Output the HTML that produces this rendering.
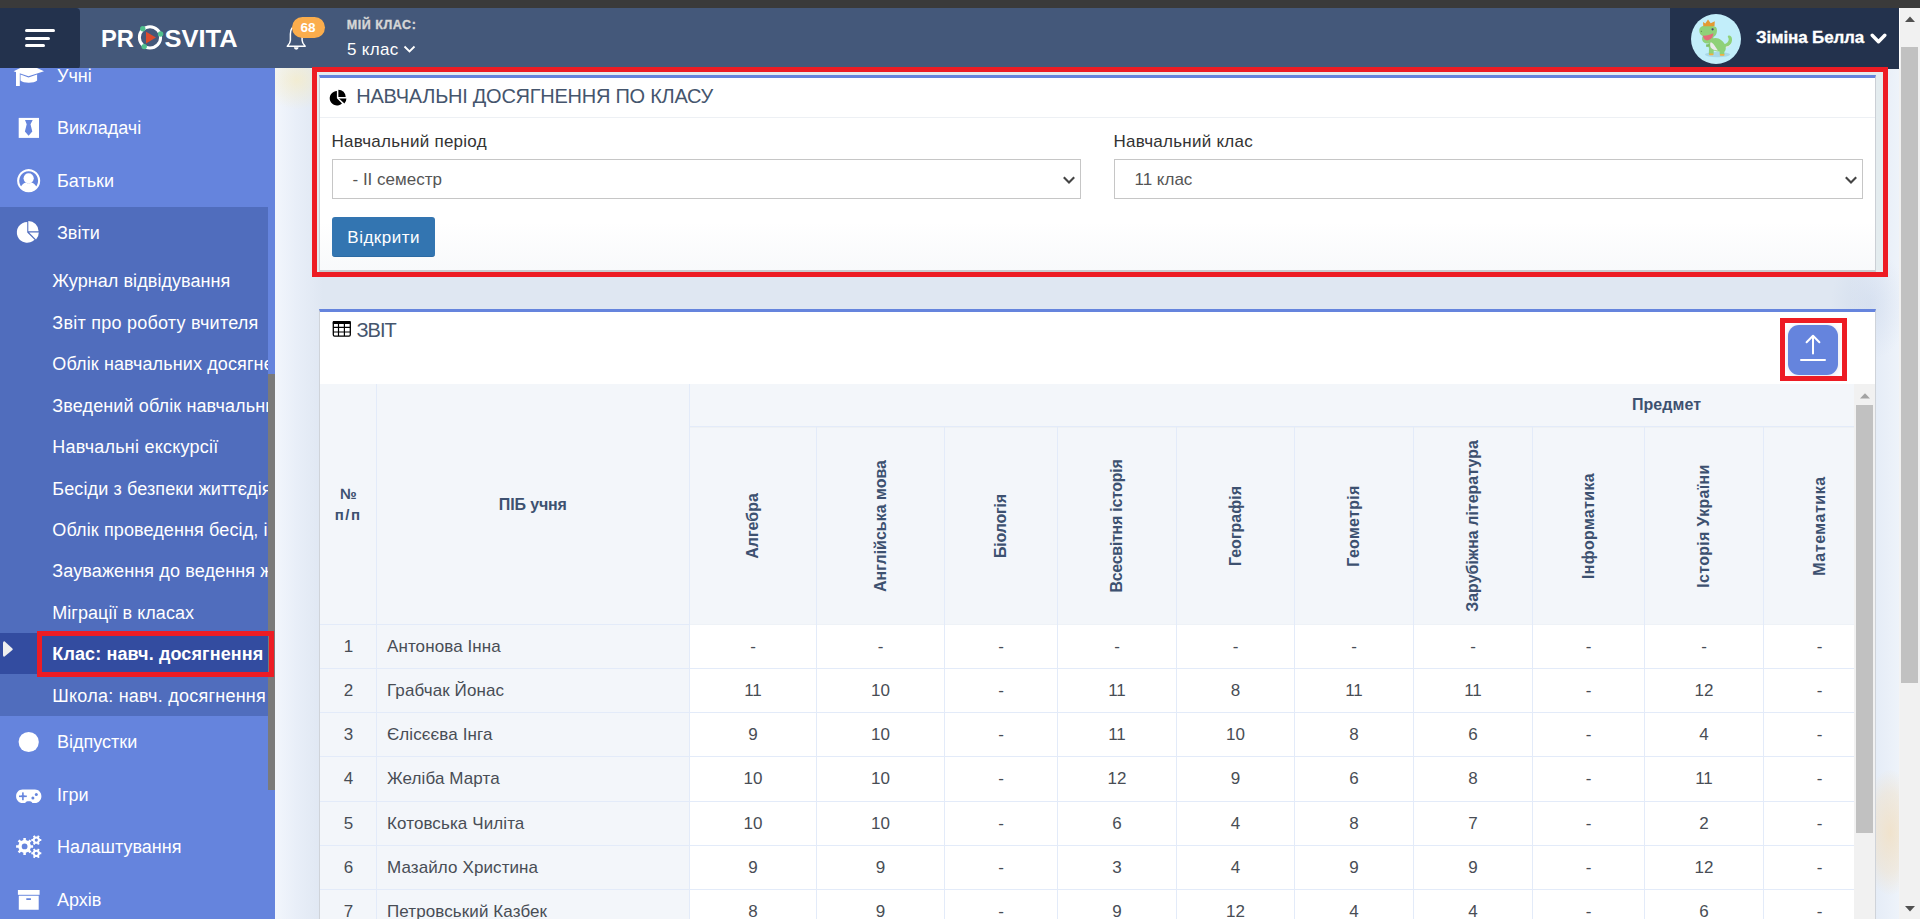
<!DOCTYPE html>
<html><head><meta charset="utf-8">
<style>
*{box-sizing:border-box;margin:0;padding:0}
html,body{width:1920px;height:919px;overflow:hidden;background:#eef3fa;font-family:"Liberation Sans",sans-serif}
.a{position:absolute}
.t{position:absolute;white-space:nowrap;line-height:1}
#topbar{left:0;top:0;width:1920px;height:8px;background:#3a3a3a}
#content{left:275px;top:68px;width:1625px;height:851px;background:linear-gradient(90deg,#f2f6fc 0px,#e8eef8 22px,#dfe7f2 48px,#dfe7f2 1575px,#e6edf7 1603px,#eef3fa 1625px)}
#header{left:0;top:8px;width:1899px;height:60px;background:#44587a}
#burger{left:0;top:8px;width:80px;height:60.5px;background:#23324d;border-radius:0 4px 4px 0}
#burger i{position:absolute;left:25px;height:3px;background:#fff;border-radius:2px}
#userbox{left:1670px;top:8px;width:229px;height:60.7px;background:#23324d}
#sidebar{left:0;top:68px;width:275px;height:851px;background:#6584dd;overflow:hidden}
.side{color:#fff;font-size:18px}
#vscroll{left:1899px;top:8px;width:21px;height:911px;background:#f1f1f1;border-left:1px solid #f3f3f3}
</style></head><body>
<div id="content" class="a"></div>
<div class="a" style="left:262px;top:50px;width:70px;height:60px;border-radius:50%;background:radial-gradient(ellipse at center,rgba(250,235,180,0.55) 0%,rgba(250,235,180,0) 70%)"></div>
<div class="a" style="left:1862px;top:770px;width:56px;height:125px;border-radius:50%;background:radial-gradient(ellipse at center,rgba(242,222,190,0.75) 0%,rgba(242,222,190,0.4) 45%,rgba(242,222,190,0) 72%)"></div>
<div class="a" style="left:1830px;top:250px;width:80px;height:110px;border-radius:50%;background:radial-gradient(ellipse at center,rgba(190,205,230,0.35) 0%,rgba(190,205,230,0) 70%)"></div>
<div id="topbar" class="a"></div>
<div id="header" class="a"></div>
<div id="burger" class="a"><i style="top:21px;width:30px"></i><i style="top:29px;width:25px"></i><i style="top:36px;width:20px"></i></div>
<svg class="a" style="left:95px;top:15px" width="150" height="45" viewBox="0 0 150 45">
  <text x="6" y="31.6" font-family="Liberation Sans" font-weight="bold" font-size="24" fill="#fff" textLength="33" lengthAdjust="spacingAndGlyphs">PR</text>
  <circle cx="55" cy="22.4" r="10.6" fill="none" stroke="#fff" stroke-width="3"/>
  <path d="M51 16.8 L61 22.4 L51 28.5 Z" fill="#dd4b2b"/>
  <circle cx="47.8" cy="13.7" r="2.7" fill="#4fc08d"/>
  <circle cx="65.6" cy="19" r="2.7" fill="#4fc08d"/>
  <circle cx="49.2" cy="31.6" r="2.7" fill="#4fc08d"/>
  <text x="69.5" y="31.6" font-family="Liberation Sans" font-weight="bold" font-size="24" fill="#fff" textLength="73" lengthAdjust="spacingAndGlyphs">SVITA</text>
</svg>
<svg class="a" style="left:284px;top:22px" width="26" height="30" viewBox="0 0 26 30">
  <path d="M12.2 4.5 C8 4.5 6.4 8 6.4 12 L6.4 18.3 C6.4 20.8 4.8 22.8 3.3 24.3 L21.2 24.3 C19.7 22.8 18.1 20.8 18.1 18.3 L18.1 12 C18.1 8 16.5 4.5 12.2 4.5 Z" fill="none" stroke="#fff" stroke-width="1.5" stroke-linejoin="round"/>
  <path d="M9.9 25.3 A2.35 2.35 0 0 0 14.6 25.3 Z" fill="#fff"/>
</svg>
<div class="a" style="left:292px;top:17px;width:33px;height:21px;border-radius:11px;background:#fbad4c"></div>
<div class="t" style="left:300.5px;top:20.8px;font-size:13.5px;font-weight:bold;color:#fff">68</div>
<div class="t" style="left:346.8px;top:18.5px;font-size:12.5px;font-weight:bold;color:#d6d6d6;letter-spacing:0.55px;-webkit-text-stroke:0.35px #d6d6d6">МІЙ КЛАС:</div>
<div class="t" style="left:347px;top:40.5px;font-size:17px;color:#fff;letter-spacing:0.3px">5 клас</div>
<svg class="a" style="left:403px;top:45px" width="13" height="9" viewBox="0 0 13 9"><path d="M1.5 1.5 L6.5 6.5 L11.5 1.5" fill="none" stroke="#fff" stroke-width="1.8"/></svg>
<div id="userbox" class="a"></div>
<svg class="a" style="left:1691px;top:14px" width="50" height="50" viewBox="0 0 50 50">
  <circle cx="25" cy="25" r="25" fill="#c2eefa"/>
  <ellipse cx="26.5" cy="40.6" rx="12.5" ry="2.6" fill="#a8d8e8"/>
  <path d="M32 33.5 C37 33.5 41.5 30 41 25 C40.8 22.5 39 21 37.2 21.8 C36.5 22.3 36.8 23 37.3 23.8 C38.3 26 37.5 29 33 30.5 Z" fill="#8fd178"/>
  <path d="M35 32.6 C37.5 32.2 39.5 31 40.5 29.5 C39.5 32.5 37 33.8 33.5 34 Z" fill="#e6e6e6"/>
  <path d="M18.5 27 C20 24 24.5 23.2 27.5 24.5 C31.5 26.5 34.8 30 34.8 34 C34.8 36.5 33.8 37.5 33.2 38 L33.5 40.5 L28.8 40.5 L28.5 37.5 C26.5 37.5 24 37 22.8 36.5 L22.5 40.2 L17.8 40.2 L18 34.5 C17 32 17.2 29 18.5 27 Z" fill="#8fd178"/>
  <path d="M19.5 28 C21.5 28.5 23 30.5 24.5 33 C25.8 35 26.5 36 27 36.5 C24 36.5 21 35.5 19.8 33.5 C19 32 19 30 19.5 28 Z" fill="#ebebeb"/>
  <path d="M15 30.5 L18.5 30 L18.8 32.5 L15.3 33 Z" fill="#7fbf68"/>
  <path d="M8.3 16.5 C8.3 13 11 11.4 15.5 11.4 C19.5 11.4 22.5 11.6 24.8 13 C26.3 14.5 26.2 17 25.5 19.5 C25 21 24 22 22.5 23 C22.5 25.5 21 28 18 29.2 C15 30 12 29 11.2 26 C11 24.5 11.2 23 11.8 22 C9.8 21.5 8.3 19.5 8.3 16.5 Z" fill="#8fd178"/>
  <path d="M11.8 21.6 C15 21.8 19 21 22.3 19.3 C22.3 22.5 20.5 25.5 17 26.3 C14.5 26.8 12.3 25 11.8 21.6 Z" fill="#e46a78"/>
  <circle cx="21.6" cy="15.3" r="1.1" fill="#40406a"/>
  <circle cx="10.3" cy="17.3" r="0.5" fill="#4a6a40"/>
  <path d="M12.3 12.2 L12 8 L14.3 9.5 L17 5.4 L19.7 9.3 L23.8 7.2 L23.5 12.2 Z" fill="#e39a32"/>
  <rect x="18" y="39.6" width="4.5" height="1.7" rx="0.8" fill="#f0b040"/>
  <rect x="28.8" y="40" width="4.7" height="1.7" rx="0.8" fill="#f0b040"/>
</svg>
<div class="t" style="left:1756px;top:28.6px;font-size:17px;font-weight:bold;color:#fff;letter-spacing:-0.15px;-webkit-text-stroke:0.3px #fff">Зіміна Белла</div>
<svg class="a" style="left:1870px;top:33px" width="17" height="12" viewBox="0 0 17 12"><path d="M2.2 2.2 L8.5 8.7 L14.8 2.2" fill="none" stroke="#fff" stroke-width="3.4" stroke-linecap="round" stroke-linejoin="round"/></svg>
<div id="vscroll" class="a"></div>
<div class="a" style="left:1899px;top:8px;width:1px;height:60px;background:#fff"></div>
<div class="a" style="left:1901px;top:47px;width:17px;height:636px;background:#c1c1c1"></div>
<svg class="a" style="left:1904px;top:15px" width="12" height="8"><path d="M1 7 L6 1.5 L11 7 Z" fill="#505050"/></svg>
<svg class="a" style="left:1904px;top:905px" width="12" height="8"><path d="M1 1 L6 6.5 L11 1 Z" fill="#505050"/></svg>
<div id="sidebar" class="a">
  <div class="a" style="left:0;top:139px;width:268px;height:509px;background:#506dbd"></div>
  <div class="a" style="left:0;top:565px;width:268px;height:41px;background:#334ca0"></div>
  <div class="a" style="left:268px;top:306px;width:7px;height:416px;background:#7a7a7a"></div>
</div>
<div class="a" style="left:0;top:68px;width:268px;height:851px;overflow:hidden">
<div class="t side" style="left:57px;top:-1.3px">Учні</div>
<div class="t side" style="left:57px;top:51.2px">Викладачі</div>
<div class="t side" style="left:57px;top:103.7px">Батьки</div>
<div class="t side" style="left:57px;top:156.2px">Звіти</div>
<div class="t side" style="left:57px;top:665.2px">Відпустки</div>
<div class="t side" style="left:57px;top:717.7px">Ігри</div>
<div class="t side" style="left:57px;top:770.2px">Налаштування</div>
<div class="t side" style="left:57px;top:822.7px">Архів</div>
<div class="t side" style="left:52.3px;top:204.1px;letter-spacing:0.07px">Журнал відвідування</div>
<div class="t side" style="left:52.3px;top:245.6px;letter-spacing:0.24px">Звіт про роботу вчителя</div>
<div class="t side" style="left:52.3px;top:287.0px;letter-spacing:0.12px">Облік навчальних досягнень</div>
<div class="t side" style="left:52.3px;top:328.5px;letter-spacing:0.12px">Зведений облік навчальних досягнень</div>
<div class="t side" style="left:52.3px;top:370.0px;letter-spacing:0.22px">Навчальні екскурсії</div>
<div class="t side" style="left:52.3px;top:411.5px;letter-spacing:0.12px">Бесіди з безпеки життєдіяльності</div>
<div class="t side" style="left:52.3px;top:452.9px;letter-spacing:0.12px">Облік проведення бесід, інструктажів</div>
<div class="t side" style="left:52.3px;top:494.4px;letter-spacing:0.12px">Зауваження до ведення журналу</div>
<div class="t side" style="left:52.3px;top:535.9px;letter-spacing:0.04px">Міграції в класах</div>
<div class="t side" style="left:52.3px;top:577.3px;font-weight:bold;letter-spacing:0.12px">Клас: навч. досягнення</div>
<div class="t side" style="left:52.3px;top:618.8px;letter-spacing:0.24px">Школа: навч. досягнення</div>
</div>
<svg class="a" style="left:0;top:68px" width="60" height="851" viewBox="0 68 60 851">
<g fill="#fff">
<path d="M13.6 71.3 L28.5 64 L44 71.3 L28.5 76.3 Z"/>
<path d="M20.5 74.6 L28.5 77.6 L37.1 74.6 L37.1 80.6 C34 83.6 23.5 83.6 20.5 80.6 Z"/>
<rect x="16" y="70" width="3.8" height="16"/>
<rect x="18.7" y="117.9" width="20.3" height="20"/>
<path d="M28.65 169.1 A11.55 11.55 0 1 0 28.66 169.1 Z M28.65 171.2 A9.45 9.45 0 1 1 28.64 171.2 Z" fill-rule="evenodd"/>
<circle cx="28.65" cy="178.3" r="5.1"/>
<path d="M20.6 187.2 C21.8 184.5 24 182.6 26 182.4 C27.3 183.6 30 183.6 31.3 182.4 C33.3 182.6 35.5 184.5 36.7 187.2 A10.2 10.2 0 0 1 20.6 187.2 Z"/>
<path d="M27.25 232.4 L27.25 222 A10.4 10.4 0 1 0 34.6 239.75 Z"/>
<path d="M28.3 231.2 L28.3 220.9 A10.3 10.3 0 0 1 38.6 231.2 Z"/>
<path d="M29.1 232.6 L38.8 232.6 A9.9 9.9 0 0 1 36 239.6 Z"/>
<circle cx="28.7" cy="742" r="10.1"/>
<path d="M22.5 789.4 L35 789.4 C38.6 789.4 41.4 792.2 41.4 796.2 C41.4 800 38.6 803 35 803 L32.4 803 C31.5 801.6 30.5 801.3 28.8 801.3 C27.1 801.3 26.1 801.6 25.2 803 L22.5 803 C18.9 803 16.1 800 16.1 796.2 C16.1 792.2 18.9 789.4 22.5 789.4 Z"/>
<path d="M30.88 845.15 L33.11 845.14 L33.11 847.66 L30.88 847.65 L29.92 849.96 L31.51 851.52 L29.72 853.31 L28.16 851.72 L25.85 852.68 L25.86 854.91 L23.34 854.91 L23.35 852.68 L21.04 851.72 L19.48 853.31 L17.69 851.52 L19.28 849.96 L18.32 847.65 L16.09 847.66 L16.09 845.14 L18.32 845.15 L19.28 842.84 L17.69 841.28 L19.48 839.49 L21.04 841.08 L23.35 840.12 L23.34 837.89 L25.86 837.89 L25.85 840.12 L28.16 841.08 L29.72 839.49 L31.51 841.28 L29.92 842.84 Z M27.50 846.40 A2.9 2.9 0 1 0 21.70 846.40 A2.9 2.9 0 1 0 27.50 846.40 Z" fill-rule="evenodd"/>
<path d="M39.97 839.12 L41.30 839.11 L41.30 841.09 L39.97 841.08 L38.99 842.79 L39.66 843.93 L37.94 844.93 L37.28 843.77 L35.32 843.77 L34.66 844.93 L32.94 843.93 L33.61 842.79 L32.63 841.08 L31.30 841.09 L31.30 839.11 L32.63 839.12 L33.61 837.41 L32.94 836.27 L34.66 835.27 L35.32 836.43 L37.28 836.43 L37.94 835.27 L39.66 836.27 L38.99 837.41 Z M37.90 840.10 A1.6 1.6 0 1 0 34.70 840.10 A1.6 1.6 0 1 0 37.90 840.10 Z" fill-rule="evenodd"/>
<path d="M39.97 852.32 L41.30 852.31 L41.30 854.29 L39.97 854.28 L38.99 855.99 L39.66 857.13 L37.94 858.13 L37.28 856.97 L35.32 856.97 L34.66 858.13 L32.94 857.13 L33.61 855.99 L32.63 854.28 L31.30 854.29 L31.30 852.31 L32.63 852.32 L33.61 850.61 L32.94 849.47 L34.66 848.47 L35.32 849.63 L37.28 849.63 L37.94 848.47 L39.66 849.47 L38.99 850.61 Z M37.90 853.30 A1.6 1.6 0 1 0 34.70 853.30 A1.6 1.6 0 1 0 37.90 853.30 Z" fill-rule="evenodd"/>
<rect x="17.9" y="890" width="21.7" height="4.8"/>
<path d="M18.8 895.8 L38.7 895.8 L38.7 909.8 L18.8 909.8 Z M26.3 898.2 L26.3 899.9 L30.9 899.9 L30.9 898.2 Z" fill-rule="evenodd"/>
</g>
<path d="M25 120 L32.7 120 L30.5 124.2 L32.3 131.6 L28.6 135.7 L24.9 131.6 L26.7 124.2 Z" fill="#6584dd"/>
<g fill="#6584dd">
<rect x="21.2" y="795.5" width="3.4" height="1.6" transform="translate(0,0)"/>
<rect x="19" y="795.5" width="7.8" height="1.6"/>
<rect x="22.1" y="792.4" width="1.6" height="7.8"/>
<circle cx="36.3" cy="794.6" r="1.5"/>
<circle cx="32.9" cy="798" r="1.5"/>
</g>
<path d="M4.5 641.2 Q3 641 3 643 L3 655 Q3 657.2 4.6 656.6 L12.4 650 Q13.2 649.2 12.4 648.4 Z" fill="#efefef"/>
</svg>
<div class="a" style="left:37px;top:631px;width:237px;height:46px;border:5px solid #ed1c24"></div>


<div class="a" style="left:317px;top:72px;width:1566px;height:200px;background:#e4ecef"></div>
<div class="a card" style="left:319px;top:75px;width:1557px;height:197px;background:linear-gradient(180deg,#fff 75%,#f8f9fb 100%);border-top:3px solid #6584dd;border-left:1px solid #cbcfd5;border-right:1px solid #cbcfd5;border-bottom:2px solid #c9cbce"></div>
<div class="a" style="left:320px;top:117px;width:1555px;height:1px;background:#edf0f4"></div>
<svg class="a" style="left:326px;top:84px" width="26" height="26" viewBox="326 84 26 26"><g fill="#000">
<path d="M336.9 98.3 L336.9 91.1 A7.2 7.2 0 1 0 342.0 103.4 Z"/>
<path d="M338.4 97.0 L338.4 89.7 A7.3 7.3 0 0 1 345.7 97.0 Z"/>
<path d="M339.0 98.6 L346.4 98.6 A7.3 7.3 0 0 1 344.4 103.6 Z"/>
</g></svg>
<div class="t" style="left:356.3px;top:86.00px;font-size:20px;color:#45556d;letter-spacing:-0.26px;">НАВЧАЛЬНІ ДОСЯГНЕННЯ ПО КЛАСУ</div>
<div class="t" style="left:331.5px;top:132.55px;font-size:17px;color:#333;letter-spacing:0.25px;">Навчальний період</div>
<div class="t" style="left:1113.5px;top:132.55px;font-size:17px;color:#333;letter-spacing:0.25px;">Навчальний клас</div>
<div class="a" style="left:332px;top:159px;width:749px;height:40px;border:1px solid #c6c6c6;background:#fff"></div>
<div class="t" style="left:352.5px;top:170.55px;font-size:17px;color:#555;">- II семестр</div>
<svg class="a" style="left:1063.0px;top:174.8px" width="12" height="10" viewBox="0 0 12 10"><path d="M0.8 2.2 L6 7.4 L11.2 2.2" fill="none" stroke="#444" stroke-width="2.1"/></svg>
<div class="a" style="left:1114px;top:159px;width:749px;height:40px;border:1px solid #c6c6c6;background:#fff"></div>
<div class="t" style="left:1134.5px;top:170.55px;font-size:17px;color:#555;">11 клас</div>
<svg class="a" style="left:1845.0px;top:174.8px" width="12" height="10" viewBox="0 0 12 10"><path d="M0.8 2.2 L6 7.4 L11.2 2.2" fill="none" stroke="#444" stroke-width="2.1"/></svg>
<div class="a" style="left:332px;top:217px;width:103px;height:40px;background:#3375b1;border-radius:3px;border-bottom:1px solid #2c6aa3"></div>
<div class="t" style="left:347.3px;top:228.75px;font-size:17px;color:#fff;letter-spacing:0.5px;">Відкрити</div>
<div class="a" style="left:312px;top:67px;width:1576px;height:210px;border:5px solid #ed1c24"></div>
<div class="a" style="left:319px;top:309px;width:1557px;height:620px;background:#fff;border-top:3px solid #6584dd;border-left:1px solid #cfd3d9;border-right:1px solid #cfd3d9"></div>
<svg class="a" style="left:328px;top:316px" width="28" height="26" viewBox="328 316 28 26">
<rect x="333.3" y="321.7" width="17" height="14.4" rx="1.3" fill="none" stroke="#000" stroke-width="1.3"/>
<rect x="332.7" y="321.1" width="18.1" height="2.8" rx="1" fill="#000"/>
<path d="M338.5 323 V336 M344.4 323 V336 M333 327.3 H350.5 M333 332 H350.5" stroke="#000" stroke-width="1.2"/>
</svg>
<div class="t" style="left:356.5px;top:319.80px;font-size:20px;color:#45556d;letter-spacing:-1px;">ЗВІТ</div>
<div class="a" style="left:1788px;top:325px;width:50px;height:50px;background:#6584dd;border-radius:11px;box-shadow:0 1px 6px rgba(60,80,140,0.15)"></div>
<svg class="a" style="left:1788px;top:325px" width="50" height="50" viewBox="1788 325 50 50" fill="none" stroke="#fff" stroke-width="2" stroke-linecap="round" stroke-linejoin="round">
<path d="M1813 353.5 V335.8 M1806.6 342.2 L1813 335.8 L1819.4 342.2 M1801 360 H1825"/></svg>
<div class="a" style="left:1780px;top:318px;width:67px;height:63px;border:5px solid #ed1c24"></div>
<div class="a" style="left:320px;top:384px;width:1534px;height:535px;overflow:hidden">
<div class="a" style="left:0px;top:0px;width:1600px;height:241px;background:#f3f6fa"></div>
<div class="a" style="left:0px;top:240px;width:369px;height:400px;background:#f3f6fa"></div>
<div class="a" style="left:370px;top:241px;width:1200px;height:400px;background:#fff"></div>
<div class="a" style="left:370px;top:240px;width:1200px;height:1px;background:#eef2f7"></div>
<div class="a" style="left:369px;top:42px;width:1200px;height:1px;background:#e3ebf9"></div>
<div class="a" style="left:370px;top:43px;width:1200px;height:1px;background:#eef1f4"></div>
<div class="a" style="left:0px;top:240px;width:369px;height:1px;background:#e3ebf9"></div>
<div class="a" style="left:0px;top:284px;width:1600px;height:1px;background:#e3ebf9"></div>
<div class="a" style="left:0px;top:328px;width:1600px;height:1px;background:#e3ebf9"></div>
<div class="a" style="left:0px;top:372px;width:1600px;height:1px;background:#e3ebf9"></div>
<div class="a" style="left:0px;top:417px;width:1600px;height:1px;background:#e3ebf9"></div>
<div class="a" style="left:0px;top:461px;width:1600px;height:1px;background:#e3ebf9"></div>
<div class="a" style="left:0px;top:505px;width:1600px;height:1px;background:#e3ebf9"></div>
<div class="a" style="left:56px;top:0px;width:1px;height:600px;background:#e3ebf9"></div>
<div class="a" style="left:369px;top:0px;width:1px;height:600px;background:#e3ebf9"></div>
<div class="a" style="left:496px;top:43px;width:1px;height:600px;background:#e3ebf9"></div>
<div class="a" style="left:624px;top:43px;width:1px;height:600px;background:#e3ebf9"></div>
<div class="a" style="left:737px;top:43px;width:1px;height:600px;background:#e3ebf9"></div>
<div class="a" style="left:856px;top:43px;width:1px;height:600px;background:#e3ebf9"></div>
<div class="a" style="left:974px;top:43px;width:1px;height:600px;background:#e3ebf9"></div>
<div class="a" style="left:1093px;top:43px;width:1px;height:600px;background:#e3ebf9"></div>
<div class="a" style="left:1212px;top:43px;width:1px;height:600px;background:#e3ebf9"></div>
<div class="a" style="left:1324px;top:43px;width:1px;height:600px;background:#e3ebf9"></div>
<div class="a" style="left:1443px;top:43px;width:1px;height:600px;background:#e3ebf9"></div>
<div class="t" style="left:-121.60000000000002px;width:300px;text-align:center;top:101.95px;font-size:15px;color:#3d5170;font-weight:bold;">№</div>
<div class="t" style="left:-121.80000000000001px;width:300px;text-align:center;top:122.85px;font-size:15px;color:#3d5170;font-weight:bold;letter-spacing:1.5px;">п/п</div>
<div class="t" style="left:62.799999999999955px;width:300px;text-align:center;top:112.70px;font-size:16px;color:#3d5170;font-weight:bold;letter-spacing:-0.15px;">ПІБ учня</div>
<div class="t" style="left:1196.6px;width:300px;text-align:center;top:13.40px;font-size:16px;color:#3d5170;font-weight:bold;letter-spacing:0.1px;">Предмет</div>
<div class="t" style="left:283.0px;top:132.4px;width:300px;height:20px;line-height:20px;text-align:center;font-size:16px;font-weight:bold;color:#3d5170;transform:rotate(-90deg)">Алгебра</div>
<div class="t" style="left:410.5px;top:132.4px;width:300px;height:20px;line-height:20px;text-align:center;font-size:16px;font-weight:bold;color:#3d5170;transform:rotate(-90deg)">Англійська мова</div>
<div class="t" style="left:531.0px;top:132.4px;width:300px;height:20px;line-height:20px;text-align:center;font-size:16px;font-weight:bold;color:#3d5170;letter-spacing:-0.2px;transform:rotate(-90deg)">Біологія</div>
<div class="t" style="left:647.0px;top:132.4px;width:300px;height:20px;line-height:20px;text-align:center;font-size:16px;font-weight:bold;color:#3d5170;letter-spacing:-0.28px;transform:rotate(-90deg)">Всесвітня історія</div>
<div class="t" style="left:765.5px;top:132.4px;width:300px;height:20px;line-height:20px;text-align:center;font-size:16px;font-weight:bold;color:#3d5170;transform:rotate(-90deg)">Географія</div>
<div class="t" style="left:884.0px;top:132.4px;width:300px;height:20px;line-height:20px;text-align:center;font-size:16px;font-weight:bold;color:#3d5170;letter-spacing:0.3px;transform:rotate(-90deg)">Геометрія</div>
<div class="t" style="left:1003.0px;top:132.4px;width:300px;height:20px;line-height:20px;text-align:center;font-size:16px;font-weight:bold;color:#3d5170;transform:rotate(-90deg)">Зарубіжна література</div>
<div class="t" style="left:1118.5px;top:132.4px;width:300px;height:20px;line-height:20px;text-align:center;font-size:16px;font-weight:bold;color:#3d5170;letter-spacing:0.33px;transform:rotate(-90deg)">Інформатика</div>
<div class="t" style="left:1234.0px;top:132.4px;width:300px;height:20px;line-height:20px;text-align:center;font-size:16px;font-weight:bold;color:#3d5170;letter-spacing:0.3px;transform:rotate(-90deg)">Історія України</div>
<div class="t" style="left:1349.5px;top:132.4px;width:300px;height:20px;line-height:20px;text-align:center;font-size:16px;font-weight:bold;color:#3d5170;letter-spacing:0.55px;transform:rotate(-90deg)">Математика</div>
<div class="t" style="left:-121.60000000000002px;width:300px;text-align:center;top:253.75px;font-size:17px;color:#484d55;">1</div>
<div class="t" style="left:67px;top:253.75px;font-size:17px;color:#484d55;letter-spacing:0.1px">Антонова Інна</div>
<div class="t" style="left:283.0px;width:300px;text-align:center;top:253.75px;font-size:17px;color:#484d55;">-</div>
<div class="t" style="left:410.5px;width:300px;text-align:center;top:253.75px;font-size:17px;color:#484d55;">-</div>
<div class="t" style="left:531.0px;width:300px;text-align:center;top:253.75px;font-size:17px;color:#484d55;">-</div>
<div class="t" style="left:647.0px;width:300px;text-align:center;top:253.75px;font-size:17px;color:#484d55;">-</div>
<div class="t" style="left:765.5px;width:300px;text-align:center;top:253.75px;font-size:17px;color:#484d55;">-</div>
<div class="t" style="left:884.0px;width:300px;text-align:center;top:253.75px;font-size:17px;color:#484d55;">-</div>
<div class="t" style="left:1003.0px;width:300px;text-align:center;top:253.75px;font-size:17px;color:#484d55;">-</div>
<div class="t" style="left:1118.5px;width:300px;text-align:center;top:253.75px;font-size:17px;color:#484d55;">-</div>
<div class="t" style="left:1234.0px;width:300px;text-align:center;top:253.75px;font-size:17px;color:#484d55;">-</div>
<div class="t" style="left:1349.5px;width:300px;text-align:center;top:253.75px;font-size:17px;color:#484d55;">-</div>
<div class="t" style="left:-121.60000000000002px;width:300px;text-align:center;top:297.75px;font-size:17px;color:#484d55;">2</div>
<div class="t" style="left:67px;top:297.75px;font-size:17px;color:#484d55;letter-spacing:0.1px">Грабчак Йонас</div>
<div class="t" style="left:283.0px;width:300px;text-align:center;top:297.75px;font-size:17px;color:#484d55;">11</div>
<div class="t" style="left:410.5px;width:300px;text-align:center;top:297.75px;font-size:17px;color:#484d55;">10</div>
<div class="t" style="left:531.0px;width:300px;text-align:center;top:297.75px;font-size:17px;color:#484d55;">-</div>
<div class="t" style="left:647.0px;width:300px;text-align:center;top:297.75px;font-size:17px;color:#484d55;">11</div>
<div class="t" style="left:765.5px;width:300px;text-align:center;top:297.75px;font-size:17px;color:#484d55;">8</div>
<div class="t" style="left:884.0px;width:300px;text-align:center;top:297.75px;font-size:17px;color:#484d55;">11</div>
<div class="t" style="left:1003.0px;width:300px;text-align:center;top:297.75px;font-size:17px;color:#484d55;">11</div>
<div class="t" style="left:1118.5px;width:300px;text-align:center;top:297.75px;font-size:17px;color:#484d55;">-</div>
<div class="t" style="left:1234.0px;width:300px;text-align:center;top:297.75px;font-size:17px;color:#484d55;">12</div>
<div class="t" style="left:1349.5px;width:300px;text-align:center;top:297.75px;font-size:17px;color:#484d55;">-</div>
<div class="t" style="left:-121.60000000000002px;width:300px;text-align:center;top:341.75px;font-size:17px;color:#484d55;">3</div>
<div class="t" style="left:67px;top:341.75px;font-size:17px;color:#484d55;letter-spacing:0.1px">Єлісєєва Інга</div>
<div class="t" style="left:283.0px;width:300px;text-align:center;top:341.75px;font-size:17px;color:#484d55;">9</div>
<div class="t" style="left:410.5px;width:300px;text-align:center;top:341.75px;font-size:17px;color:#484d55;">10</div>
<div class="t" style="left:531.0px;width:300px;text-align:center;top:341.75px;font-size:17px;color:#484d55;">-</div>
<div class="t" style="left:647.0px;width:300px;text-align:center;top:341.75px;font-size:17px;color:#484d55;">11</div>
<div class="t" style="left:765.5px;width:300px;text-align:center;top:341.75px;font-size:17px;color:#484d55;">10</div>
<div class="t" style="left:884.0px;width:300px;text-align:center;top:341.75px;font-size:17px;color:#484d55;">8</div>
<div class="t" style="left:1003.0px;width:300px;text-align:center;top:341.75px;font-size:17px;color:#484d55;">6</div>
<div class="t" style="left:1118.5px;width:300px;text-align:center;top:341.75px;font-size:17px;color:#484d55;">-</div>
<div class="t" style="left:1234.0px;width:300px;text-align:center;top:341.75px;font-size:17px;color:#484d55;">4</div>
<div class="t" style="left:1349.5px;width:300px;text-align:center;top:341.75px;font-size:17px;color:#484d55;">-</div>
<div class="t" style="left:-121.60000000000002px;width:300px;text-align:center;top:386.25px;font-size:17px;color:#484d55;">4</div>
<div class="t" style="left:67px;top:386.25px;font-size:17px;color:#484d55;letter-spacing:0.1px">Желіба Марта</div>
<div class="t" style="left:283.0px;width:300px;text-align:center;top:386.25px;font-size:17px;color:#484d55;">10</div>
<div class="t" style="left:410.5px;width:300px;text-align:center;top:386.25px;font-size:17px;color:#484d55;">10</div>
<div class="t" style="left:531.0px;width:300px;text-align:center;top:386.25px;font-size:17px;color:#484d55;">-</div>
<div class="t" style="left:647.0px;width:300px;text-align:center;top:386.25px;font-size:17px;color:#484d55;">12</div>
<div class="t" style="left:765.5px;width:300px;text-align:center;top:386.25px;font-size:17px;color:#484d55;">9</div>
<div class="t" style="left:884.0px;width:300px;text-align:center;top:386.25px;font-size:17px;color:#484d55;">6</div>
<div class="t" style="left:1003.0px;width:300px;text-align:center;top:386.25px;font-size:17px;color:#484d55;">8</div>
<div class="t" style="left:1118.5px;width:300px;text-align:center;top:386.25px;font-size:17px;color:#484d55;">-</div>
<div class="t" style="left:1234.0px;width:300px;text-align:center;top:386.25px;font-size:17px;color:#484d55;">11</div>
<div class="t" style="left:1349.5px;width:300px;text-align:center;top:386.25px;font-size:17px;color:#484d55;">-</div>
<div class="t" style="left:-121.60000000000002px;width:300px;text-align:center;top:430.75px;font-size:17px;color:#484d55;">5</div>
<div class="t" style="left:67px;top:430.75px;font-size:17px;color:#484d55;letter-spacing:0.1px">Котовська Чиліта</div>
<div class="t" style="left:283.0px;width:300px;text-align:center;top:430.75px;font-size:17px;color:#484d55;">10</div>
<div class="t" style="left:410.5px;width:300px;text-align:center;top:430.75px;font-size:17px;color:#484d55;">10</div>
<div class="t" style="left:531.0px;width:300px;text-align:center;top:430.75px;font-size:17px;color:#484d55;">-</div>
<div class="t" style="left:647.0px;width:300px;text-align:center;top:430.75px;font-size:17px;color:#484d55;">6</div>
<div class="t" style="left:765.5px;width:300px;text-align:center;top:430.75px;font-size:17px;color:#484d55;">4</div>
<div class="t" style="left:884.0px;width:300px;text-align:center;top:430.75px;font-size:17px;color:#484d55;">8</div>
<div class="t" style="left:1003.0px;width:300px;text-align:center;top:430.75px;font-size:17px;color:#484d55;">7</div>
<div class="t" style="left:1118.5px;width:300px;text-align:center;top:430.75px;font-size:17px;color:#484d55;">-</div>
<div class="t" style="left:1234.0px;width:300px;text-align:center;top:430.75px;font-size:17px;color:#484d55;">2</div>
<div class="t" style="left:1349.5px;width:300px;text-align:center;top:430.75px;font-size:17px;color:#484d55;">-</div>
<div class="t" style="left:-121.60000000000002px;width:300px;text-align:center;top:474.75px;font-size:17px;color:#484d55;">6</div>
<div class="t" style="left:67px;top:474.75px;font-size:17px;color:#484d55;letter-spacing:0.1px">Мазайло Христина</div>
<div class="t" style="left:283.0px;width:300px;text-align:center;top:474.75px;font-size:17px;color:#484d55;">9</div>
<div class="t" style="left:410.5px;width:300px;text-align:center;top:474.75px;font-size:17px;color:#484d55;">9</div>
<div class="t" style="left:531.0px;width:300px;text-align:center;top:474.75px;font-size:17px;color:#484d55;">-</div>
<div class="t" style="left:647.0px;width:300px;text-align:center;top:474.75px;font-size:17px;color:#484d55;">3</div>
<div class="t" style="left:765.5px;width:300px;text-align:center;top:474.75px;font-size:17px;color:#484d55;">4</div>
<div class="t" style="left:884.0px;width:300px;text-align:center;top:474.75px;font-size:17px;color:#484d55;">9</div>
<div class="t" style="left:1003.0px;width:300px;text-align:center;top:474.75px;font-size:17px;color:#484d55;">9</div>
<div class="t" style="left:1118.5px;width:300px;text-align:center;top:474.75px;font-size:17px;color:#484d55;">-</div>
<div class="t" style="left:1234.0px;width:300px;text-align:center;top:474.75px;font-size:17px;color:#484d55;">12</div>
<div class="t" style="left:1349.5px;width:300px;text-align:center;top:474.75px;font-size:17px;color:#484d55;">-</div>
<div class="t" style="left:-121.60000000000002px;width:300px;text-align:center;top:518.75px;font-size:17px;color:#484d55;">7</div>
<div class="t" style="left:67px;top:518.75px;font-size:17px;color:#484d55;letter-spacing:0.1px">Петровський Казбек</div>
<div class="t" style="left:283.0px;width:300px;text-align:center;top:518.75px;font-size:17px;color:#484d55;">8</div>
<div class="t" style="left:410.5px;width:300px;text-align:center;top:518.75px;font-size:17px;color:#484d55;">9</div>
<div class="t" style="left:531.0px;width:300px;text-align:center;top:518.75px;font-size:17px;color:#484d55;">-</div>
<div class="t" style="left:647.0px;width:300px;text-align:center;top:518.75px;font-size:17px;color:#484d55;">9</div>
<div class="t" style="left:765.5px;width:300px;text-align:center;top:518.75px;font-size:17px;color:#484d55;">12</div>
<div class="t" style="left:884.0px;width:300px;text-align:center;top:518.75px;font-size:17px;color:#484d55;">4</div>
<div class="t" style="left:1003.0px;width:300px;text-align:center;top:518.75px;font-size:17px;color:#484d55;">4</div>
<div class="t" style="left:1118.5px;width:300px;text-align:center;top:518.75px;font-size:17px;color:#484d55;">-</div>
<div class="t" style="left:1234.0px;width:300px;text-align:center;top:518.75px;font-size:17px;color:#484d55;">6</div>
<div class="t" style="left:1349.5px;width:300px;text-align:center;top:518.75px;font-size:17px;color:#484d55;">-</div>
</div>
<div class="a" style="left:1854px;top:384px;width:21px;height:535px;background:#f1f1f1"></div>
<div class="a" style="left:1856px;top:405px;width:17px;height:428px;background:#c1c1c1"></div>
<svg class="a" style="left:1859px;top:392px" width="12" height="8"><path d="M1 6.5 L6 1.2 L11 6.5 Z" fill="#a3a3a3"/></svg>
</body></html>
